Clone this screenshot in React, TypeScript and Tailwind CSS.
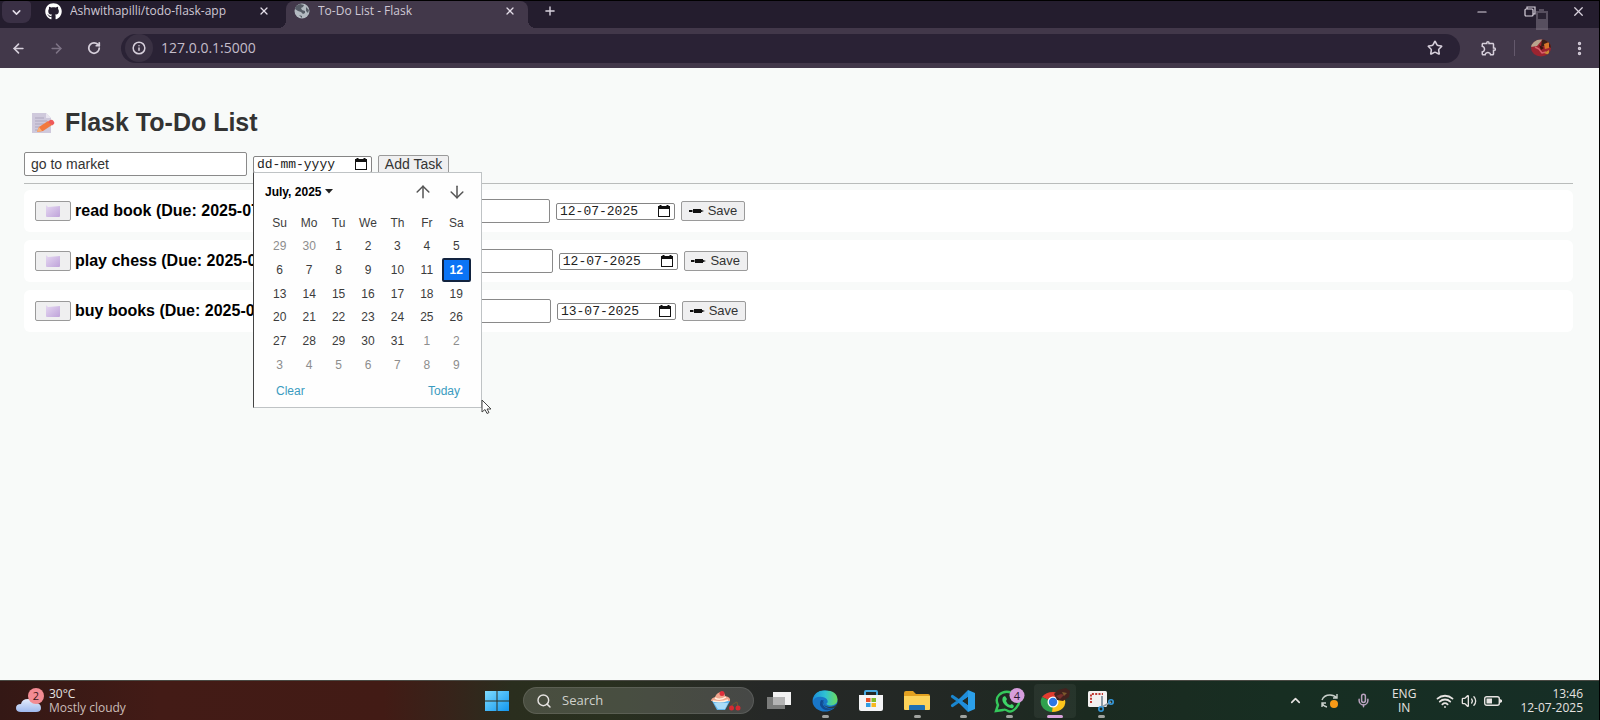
import React, { useState } from "react";
import {
  ArrowLeft,
  ArrowRight,
  ArrowUp,
  ArrowDown,
  ChevronDown,
  ChevronUp,
  Info,
  Mic,
  Minus,
  MoreVertical,
  Plus,
  RotateCw,
  Search,
  Star,
  Volume2,
  Wifi,
  X,
} from "lucide-react";
import { FaGithub } from "react-icons/fa";
import { MdOutlineExtension } from "react-icons/md";

type Task = { title: string; due: string; date: string };

const tasks: Task[] = [
  { title: "read book", due: "2025-07-12", date: "12-07-2025" },
  { title: "play chess", due: "2025-07-12", date: "12-07-2025" },
  { title: "buy books", due: "2025-07-13", date: "13-07-2025" },
];

const weekdays = ["Su", "Mo", "Tu", "We", "Th", "Fr", "Sa"];

const days = Array.from({ length: 42 }, (_, i) => {
  if (i < 2) return { n: 29 + i, muted: true };
  if (i < 33) return { n: i - 1, muted: false };
  return { n: i - 32, muted: true };
});

function Memo() {
  return (
    <svg viewBox="0 0 24 22" className="h-[22px] w-6" aria-hidden="true">
      <path d="M1 1h14l5 5v15H1z" fill="#cfc9dc" />
      <path d="M15 1l5 5h-5z" fill="#e9e5f0" />
      <path d="M4 6h9M4 9h12M4 12h9M4 15h5M4 18h4" stroke="#aea7bf" strokeWidth="1" />
      <path d="M6 20l2-5L17 9l4 4-9 6z" fill="#f2793f" />
      <path d="M17 10l2-2q2-1 3.500 1t.5 3l-2 1.500z" fill="#ee5a5a" />
      <path d="M6 20l2-5 3 4z" fill="#f9b27a" />
    </svg>
  );
}

function Globe() {
  return (
    <svg viewBox="0 0 16 16" className="size-4 shrink-0" aria-hidden="true">
      <circle cx="8" cy="8" r="7.500" fill="#b3bac1" />
      <path d="M6 1l4 1-1 2-2 1 1 2 3 1v2l-2 1-2-2-3-1-3-2 1-3z" fill="#565c66" />
      <path d="M12 4l3 3-1 3-2-2zM5 12l3 1v2z" fill="#565c66" />
    </svg>
  );
}

function CheckTile() {
  return (
    <svg viewBox="0 0 14 12" className="h-3 w-3.5" aria-hidden="true">
      <defs>
        <linearGradient id="tile" x1="0" y1="0" x2="1" y2="1">
          <stop offset="0" stopColor="#e6d9f2" />
          <stop offset="1" stopColor="#bfa3da" />
        </linearGradient>
      </defs>
      <path d="M0 0l2 2 12-1v10q0 1-1 1H1q-1 0-1-1z" fill="url(#tile)" />
    </svg>
  );
}

function CalendarIcon() {
  return (
    <svg viewBox="0 0 12 12" className="h-3 w-3 shrink-0" aria-hidden="true">
      <path d="M1.500 0h2v1h5V0h2v1H12v11H0V1h1.500zM1 4v7h10V4z" fill="#111" fillRule="evenodd" />
    </svg>
  );
}

function SaveMark() {
  return (
    <svg viewBox="0 0 15 6" className="h-1.5 w-[15px]" aria-hidden="true">
      <path d="M0 2h3v2H0zM4 1h8v4H4zM12 2l3 1-3 1z" fill="#111" />
      <path d="M2 2.500h11v1H2z" fill="#111" />
    </svg>
  );
}

function DateBox({ value, label }: { value: string; label: string }) {
  return (
    <label className="flex h-[17px] w-[119px] items-center justify-between rounded-xs border border-[#858585] bg-white pr-1 pl-[3px]">
      <input
        aria-label={label}
        defaultValue={value}
        className="h-full w-24 bg-transparent font-['Liberation_Mono',monospace] text-[13px] leading-4 text-[#222] outline-none"
      />
      <CalendarIcon />
    </label>
  );
}

function Tab({ title, active, icon }: { title: string; active?: boolean; icon: React.ReactNode }) {
  return (
    <div
      className={
        active
          ? "relative flex h-[27px] w-[242px] items-center rounded-t-lg bg-[#42384a] pr-3 pb-[7px] pl-2"
          : "flex h-[27px] w-[255px] items-center pr-4 pb-[7px] pl-3.5"
      }
    >
      {active && (
        <>
          <span className="absolute bottom-0 -left-2 size-2 bg-[radial-gradient(circle_at_0_0,transparent_8px,#42384a_8px)]" />
          <span className="absolute -right-2 bottom-0 size-2 bg-[radial-gradient(circle_at_100%_0,transparent_8px,#42384a_8px)]" />
        </>
      )}
      {icon}
      <span className="ml-2 flex-1 truncate text-xs text-[#cfc8d4]">{title}</span>
      <button aria-label={`Close ${title}`} className="text-[#e3dde8]">
        <X size={12} strokeWidth={2.5} />
      </button>
    </div>
  );
}

function Browser() {
  return (
    <header className="relative font-['Open_Sans','Noto_Sans',sans-serif]">
      <div className="flex h-7 items-end border-t border-black bg-[#241d2e]">
        <button aria-label="Search tabs" className="ml-0.5 flex h-[22px] w-[29px] items-center justify-center self-start rounded-t rounded-b-lg bg-[#3a3045] text-[#e3dde8]">
          <ChevronDown size={13} strokeWidth={2.8} />
        </button>
        <Tab title="Ashwithapilli/todo-flask-app" icon={<FaGithub size={17} className="text-white" />} />
        <Tab active title="To-Do List - Flask" icon={<Globe />} />
        <button aria-label="New tab" className="ml-[15px] self-start pt-[3px] text-[#d9d3de]">
          <Plus size={14} strokeWidth={2.4} />
        </button>
        <div className="ml-auto flex gap-[35px] self-start pt-[3px] pr-[13px] text-[#d9d3de]">
          <button aria-label="Minimize"><Minus size={14} strokeWidth={2} /></button>
          <button aria-label="Restore">
            <svg viewBox="0 0 12 12" className="h-3 w-3" fill="none" stroke="currentColor" strokeWidth="1.2">
              <rect x="1" y="3" width="8" height="7" rx="1" />
              <path d="M3 3V1h8v7H9" />
            </svg>
          </button>
          <button aria-label="Close"><X size={15} strokeWidth={2} /></button>
        </div>
      </div>
      <div className="flex h-10 items-center bg-[#42384a] text-[#d6cfdb]">
        <nav className="flex items-center gap-[23px] pl-[11px]">
          <button aria-label="Back"><ArrowLeft size={15} strokeWidth={2.6} /></button>
          <button aria-label="Forward" className="text-[#7d7385]"><ArrowRight size={15} strokeWidth={2.4} /></button>
          <button aria-label="Reload"><RotateCw size={14} strokeWidth={3} /></button>
        </nav>
        <div className="ml-5 flex h-[29px] flex-1 items-center rounded-full bg-[#2a2235] pr-[17px] pl-1">
          <button aria-label="Site information" className="flex size-7 items-center justify-center rounded-full bg-[#3a3143]">
            <Info size={14} strokeWidth={2.6} />
          </button>
          <input aria-label="Address" defaultValue="127.0.0.1:5000" className="ml-2 flex-1 bg-transparent text-sm text-[#c4bdca] outline-none" />
          <button aria-label="Bookmark"><Star size={16} strokeWidth={2.4} /></button>
        </div>
        <div className="flex items-center gap-3 pr-[11px] pl-5">
          <button aria-label="Extensions"><MdOutlineExtension size={18} /></button>
          <span className="mx-1 h-4 w-px bg-[#64596c]" />
          <button aria-label="Profile" className="flex">
            <svg viewBox="0 0 20 18" className="h-[18px] w-5">
              <clipPath id="avatar"><ellipse cx="10" cy="9" rx="10" ry="8.500" /></clipPath>
              <g clipPath="url(#avatar)">
                <path d="M0 0h20v18H0z" fill="#9c2430" />
                <path d="M0 0h12L6 7 0 8z" fill="#b8a58e" />
                <path d="M11 0h9v9l-4-3-6 2z" fill="#3a2018" />
                <path d="M13 5l5-2v6l-4 1z" fill="#d8762a" />
                <path d="M4 8l4 2 3 4 4-1" stroke="#d8606c" strokeWidth="1.500" fill="none" />
                <path d="M8 6l5 3-3 2z" fill="#3d140f" />
                <path d="M13 14l5-3v5z" fill="#c98a35" />
              </g>
            </svg>
          </button>
          <button aria-label="Menu" className="ml-2"><MoreVertical size={17} strokeWidth={2.8} /></button>
        </div>
      </div>
      <svg viewBox="0 0 14 22" className="absolute top-2 right-[50px] h-[22px] w-3.5" aria-hidden="true">
        <path d="M4 1h5v2h4v19H1V3h3z" fill="#7a7280" opacity=".6" />
        <path d="M3 5h8v6H3z" fill="#2a2333" />
      </svg>
    </header>
  );
}

function DatePicker() {
  const [selected, setSelected] = useState(13);
  return (
    <div className="absolute top-4 left-0 z-10 w-[229px] border border-[#bfc3c5] border-l-[#444] bg-[#fefefe] pt-2 pr-2.5 pb-1.5 pl-[11px] text-xs text-[#3c3c3c]">
      <div className="flex h-[22px] items-center">
        <button className="flex items-center gap-1 font-bold text-black">
          July, 2025
          <svg viewBox="0 0 8 5" className="h-[5px] w-2"><path d="M0 0h8L4 4.500z" fill="#222" /></svg>
        </button>
        <button aria-label="Previous month" className="mr-3.5 ml-auto text-[#555]"><ArrowUp size={20} strokeWidth={1.8} /></button>
        <button aria-label="Next month" className="mr-1 text-[#555]"><ArrowDown size={20} strokeWidth={1.8} /></button>
      </div>
      <div className="mt-2 grid h-6 grid-cols-7 items-center text-center">
        {weekdays.map((d) => <span key={d}>{d}</span>)}
      </div>
      <div className="grid h-[142px] grid-cols-7 grid-rows-6">
        {days.map((d, i) => (
          <button
            key={i}
            onClick={() => setSelected(i)}
            className={
              i === selected
                ? "rounded-xs border-2 border-[#12233f] bg-[#0b74f5] font-bold text-white"
                : d.muted
                  ? "text-[#8d8d8d]"
                  : "text-[#3c3c3c]"
            }
          >
            {d.n}
          </button>
        ))}
      </div>
      <div className="mt-1 flex justify-between px-[11px] leading-5 text-[#3a9bc0]">
        <button>Clear</button>
        <button>Today</button>
      </div>
      <svg viewBox="0 0 12 16" className="absolute -right-3 -bottom-2 h-4 w-3" aria-hidden="true">
        <path d="M1 1v12l3-2.500 2 4 2-1-2-3.500h4z" fill="#fff" stroke="#444" strokeWidth="1" />
      </svg>
    </div>
  );
}

const fieldClass = "h-6 w-[223px] rounded-xs border border-[#8a8a8a] bg-white px-1.5 text-sm text-[#333] outline-none";

function TaskRow({ task }: { task: Task }) {
  return (
    <li className="flex h-[42px] items-center gap-1.5 rounded-md bg-white px-[11px]">
      <button aria-label={`Mark ${task.title} done`} className="flex h-5 w-9 items-center justify-center rounded-xs border border-[#9a9a9a] bg-[#efeff0]">
        <CheckTile />
      </button>
      <span className="-ml-0.5 min-w-[216px] font-bold whitespace-nowrap text-black">
        {task.title} (Due: {task.due})
      </span>
      <input aria-label={`New title for ${task.title}`} className={`ml-[30px] ${fieldClass}`} />
      <DateBox value={task.date} label={`New due date for ${task.title}`} />
      <button className="flex h-5 w-16 items-center justify-center gap-1 rounded-xs border border-[#9a9a9a] bg-[#efeff0] text-[13px] text-[#333]">
        <SaveMark />
        Save
      </button>
    </li>
  );
}

function TodoPage() {
  return (
    <main className="flex-1 bg-[#f8faf9] pt-9 pr-[26px] pl-6 font-['Liberation_Sans',Arial,sans-serif]">
      <h1 className="flex h-[38px] items-center gap-2.5 pl-[7px] text-[25px] font-bold text-[#333]">
        <Memo />
        Flask To-Do List
      </h1>
      <form className="mt-2.5 flex items-center gap-1.5" onSubmit={(e) => e.preventDefault()}>
        <input aria-label="Task" defaultValue="go to market" className={fieldClass} />
        <div className="relative">
          <DateBox value="dd-mm-yyyy" label="Due date" />
          <DatePicker />
        </div>
        <button className="h-[19px] w-[71px] rounded-xs border border-[#9a9a9a] bg-[#efeff0] text-sm leading-4 text-[#333]">Add Task</button>
      </form>
      <hr className="mt-[7px] border-[#b9bcbb]" />
      <ul className="mt-1.5 flex flex-col gap-2">
        {tasks.map((t) => <TaskRow key={t.title} task={t} />)}
      </ul>
    </main>
  );
}

function AppButton({ name, running, active, children }: { name: string; running?: boolean; active?: boolean; children: React.ReactNode }) {
  return (
    <button
      aria-label={name}
      className={active ? "relative mx-0.5 flex h-[34px] w-[42px] items-center justify-center rounded bg-white/5" : "relative flex h-[34px] w-[46px] items-center justify-center"}
    >
      {children}
      {running && <span className="absolute bottom-0 h-[3px] w-[7px] rounded-full bg-[#a0a3a0]" />}
      {active && <span className="absolute bottom-0 h-[3px] w-4 rounded-full bg-[#d9a3dc]" />}
    </button>
  );
}

function Taskbar() {
  return (
    <footer className="grid h-10 grid-cols-[1fr_auto_1fr] items-center border-t border-[#4a4a44] bg-[linear-gradient(90deg,#341815_0%,#431b16_10%,#421b15_24%,#37231a_28%,#2a2e1e_32%,#29301f_38%,#262827_48%,#222824_60%,#1b2a20_68%,#172e22_80%,#162e26_100%)] font-['Open_Sans','Noto_Sans',sans-serif] text-[#e6e3e1]">
      <button className="flex items-center gap-[5px] pl-4 text-left text-xs leading-[14px]">
        <svg viewBox="0 0 28 26" className="h-[26px] w-7">
          <defs>
            <linearGradient id="cloud" x1="0" y1="0" x2="0" y2="1">
              <stop offset="0" stopColor="#e4ecfb" />
              <stop offset="1" stopColor="#9fb9ee" />
            </linearGradient>
          </defs>
          <path d="M5 24q-5 0-5-4t5-4q1-5 7-5 5 0 7 4 6 0 6 5 0 4-5 4z" fill="url(#cloud)" />
          <circle cx="20" cy="8" r="8" fill="#f38b93" />
          <text x="20" y="12" textAnchor="middle" fontSize="11" fill="#3a1515">2</text>
        </svg>
        <span>
          <span className="block">30°C</span>
          <span className="block text-[#cbbdb9]">Mostly cloudy</span>
        </span>
      </button>

      <div className="flex items-center pl-2.5">
        <button aria-label="Start">
          <svg viewBox="0 0 24 20" className="h-5 w-6">
            <defs>
              <linearGradient id="win" x1="0" y1="0" x2="1" y2="1">
                <stop offset="0" stopColor="#7fdcff" />
                <stop offset="1" stopColor="#1196ee" />
              </linearGradient>
            </defs>
            <path d="M0 0h11.500v9.500H0zM12.500 0H24v9.500H12.500zM0 10.500h11.500V20H0zM12.500 10.500H24V20H12.500z" fill="url(#win)" />
          </svg>
        </button>
        <label className="mr-0.5 ml-3.5 flex h-[27px] w-[231px] items-center rounded-full border border-white/10 bg-white/15 px-3">
          <Search size={16} strokeWidth={2.2} className="shrink-0" />
          <input aria-label="Search" placeholder="Search" className="ml-2.5 w-24 flex-1 bg-transparent text-[13px] outline-none placeholder:text-[#cfd1cc]" />
          <svg viewBox="0 0 30 20" className="h-5 w-[30px]" aria-hidden="true">
            <path d="M1 10h18l-5 9H6z" fill="#63b7ee" />
            <path d="M3 12h14l-3 6H7z" fill="#a9dcf8" />
            <path d="M0 10q0-3 4-4Q6 1 11 1q3 1 3 4 6 1 5 5z" fill="#f0a68e" />
            <path d="M4 7q5 3 11-1M2 10q8 2 15-1" stroke="#fff0df" strokeWidth="1.500" fill="none" />
            <circle cx="11" cy="2.500" r="2.500" fill="#df2f3b" />
            <path d="M20 16q2-4 6-5M27 16l-1-5" stroke="#6d5b32" fill="none" />
            <circle cx="20.500" cy="17" r="2.500" fill="#d52a31" />
            <circle cx="27" cy="17" r="2.500" fill="#d52a31" />
          </svg>
        </label>
        <AppButton name="Task view">
          <svg viewBox="0 0 26 20" className="h-5 w-[26px]">
            <path d="M7 1h18v13H7z" fill="#f2f2f2" />
            <path d="M1 6h18v12H1z" fill="#858585" opacity=".9" />
            <path d="M7 6h12v8H7z" fill="#b4b4b4" />
          </svg>
        </AppButton>
        <AppButton name="Edge" running>
          <svg viewBox="0 0 26 22" className="h-[22px] w-[26px]">
            <defs>
              <linearGradient id="edgeA" x1="0" y1="0" x2="1" y2="0">
                <stop offset="0" stopColor="#1c8fd8" />
                <stop offset="0.5" stopColor="#2fc2d4" />
                <stop offset="1" stopColor="#6bdc5c" />
              </linearGradient>
            </defs>
            <ellipse cx="13" cy="11" rx="12.500" ry="10.500" fill="#1976c8" />
            <path d="M1 9Q3 0 13 .500q12 0 12.500 9 0 5-6 6-5 0-5-2 2-1 1-3-1-3-5-3.500Q3 6 1 11z" fill="url(#edgeA)" />
            <path d="M9 10q-3 5 2 9 5 3 11-1-8 2-11-3-1-3 1-4.500z" fill="#114b93" />
            <path d="M12 11q-2 5 5 6 5 0 8-3l1 3-4 1q-7 1-10-3z" fill="#2b2f2d" opacity=".8" />
          </svg>
        </AppButton>
        <AppButton name="Store">
          <svg viewBox="0 0 26 22" className="h-[22px] w-[26px]">
            <path d="M7 6V2q0-1 1-1h10q1 0 1 1v4" stroke="#46a8e0" strokeWidth="2" fill="none" />
            <path d="M1 5h24v14q0 2-2 2H3q-2 0-2-2z" fill="#f4f4f6" />
            <path d="M8 8h4.500v4H8z" fill="#e8502c" />
            <path d="M13.500 8H18v4h-4.500z" fill="#7fba2a" />
            <path d="M8 13h4.500v4H8z" fill="#2f9de4" />
            <path d="M13.500 13H18v4h-4.500z" fill="#f7b81f" />
          </svg>
        </AppButton>
        <AppButton name="File Explorer" running>
          <svg viewBox="0 0 26 20" className="h-5 w-[26px]">
            <path d="M0 2q0-2 2-2h7l3 3h12q2 0 2 2v4H0z" fill="#e2a020" />
            <path d="M0 5h26v13q0 1-1 1H1q-1 0-1-1z" fill="#fcd25a" />
            <path d="M5 15q0-1 1-1h14q1 0 1 1v4H5z" fill="#1e6fb4" />
          </svg>
        </AppButton>
        <AppButton name="Visual Studio Code" running>
          <svg viewBox="0 0 26 22" className="h-[22px] w-[26px]">
            <path d="M2.500 6.500L19 18M2.500 15.500L19 4" stroke="#1a86cf" strokeWidth="3.200" strokeLinecap="round" />
            <path d="M18 0l7 3v16l-7 3z" fill="#2b9fea" />
            <path d="M18 0v7l-6 4 6 4v7L8 12v-2z" fill="#1f8ddb" />
            <path d="M18 7v8l-5-4z" fill="#232b26" />
          </svg>
        </AppButton>
        <AppButton name="WhatsApp" running>
          <svg viewBox="0 0 32 26" className="h-[26px] w-8">
            <path d="M3 23l2-6Q2 11 6 7t10-3 9 6-2 10-8 3-5-1z" fill="none" stroke="#35c75b" strokeWidth="2.400" />
            <path d="M10 9l2-1 2 3-1 2q1 3 4 4l2-1 2 2-1 2q-4 1-8-3t-2-8z" fill="#3ed267" />
            <circle cx="24" cy="7.500" r="7.500" fill="#d69ddc" />
            <text x="24" y="11.500" textAnchor="middle" fontSize="11" fill="#2b1830">4</text>
          </svg>
        </AppButton>
        <AppButton name="Chrome" active>
          <svg viewBox="0 0 30 26" className="h-[26px] w-[30px]">
            <path d="M13 14L2 9Q6 4 13 4q8 0 11 6z" fill="#e03c30" />
            <path d="M13 14L2 9q-3 6 1 11 4 4 9 4z" fill="#2fa14d" />
            <path d="M13 14l11-4q3 5-1 10-4 4-11 4z" fill="#fbc61c" />
            <circle cx="13" cy="14" r="5.500" fill="#fff" />
            <circle cx="13" cy="14" r="4.200" fill="#2c77e5" />
            <path d="M14 6l4-4 8-2 4 3-1 6-6 4-6-1z" fill="#43221e" />
            <path d="M16 8l5-2 3 1-4 4z" fill="#7a302c" />
            <path d="M22 4l5 1-3 3z" fill="#7c5a2c" />
          </svg>
        </AppButton>
        <AppButton name="Snipping Tool" running>
          <svg viewBox="0 0 26 22" className="h-[22px] w-[26px]">
            <rect x="0" y="1" width="19" height="16" rx="1.500" fill="#f3f1f1" />
            <path d="M3 13V4h12" fill="none" stroke="#c13a34" strokeWidth="2" strokeDasharray="2 1.300" />
            <path d="M14 6v10M14 17l9-5" stroke="#8c9aa5" strokeWidth="2" />
            <circle cx="13" cy="19" r="2.200" fill="none" stroke="#3498db" strokeWidth="1.600" />
            <circle cx="23" cy="12" r="2.200" fill="none" stroke="#3498db" strokeWidth="1.600" />
          </svg>
        </AppButton>
      </div>

      <div className="flex items-center justify-end pr-4 text-xs leading-[14px]">
        <button aria-label="Show hidden icons" className="mr-[18px]"><ChevronUp size={15} strokeWidth={2.6} /></button>
        <button aria-label="Update" className="mr-[17px]">
          <svg viewBox="0 0 18 16" className="h-4 w-[18px]" fill="none" stroke="#c9d0cb" strokeWidth="1.400">
            <path d="M1 7q2-5 8-5 4 0 7 3M16 1v4h-4M1 10q1 3 5 4M1 14v-4h4" />
            <circle cx="13" cy="11" r="4" fill="#f79a17" stroke="none" />
          </svg>
        </button>
        <button aria-label="Microphone" className="mr-[21px] text-[#b9a2bf]"><Mic size={15} strokeWidth={2.4} /></button>
        <button className="mr-5 text-center">ENG<br />IN</button>
        <button aria-label="Network, sound and battery" className="mr-[18px] flex items-center gap-[7px]">
          <Wifi size={18} strokeWidth={2.4} />
          <Volume2 size={16} strokeWidth={2} />
          <svg viewBox="0 0 18 10" className="h-2.5 w-[18px]">
            <rect x=".7" y=".7" width="14.600" height="8.600" rx="2" fill="none" stroke="currentColor" strokeWidth="1.400" />
            <path d="M2.500 2.500H8v5H2.500zM16 3l2 1v2l-2 1z" fill="currentColor" />
          </svg>
        </button>
        <time className="text-right">13:46<br />12-07-2025</time>
      </div>
    </footer>
  );
}

export default function App() {
  return (
    <div className="flex min-h-screen flex-col border-r border-black">
      <Browser />
      <TodoPage />
      <Taskbar />
    </div>
  );
}
